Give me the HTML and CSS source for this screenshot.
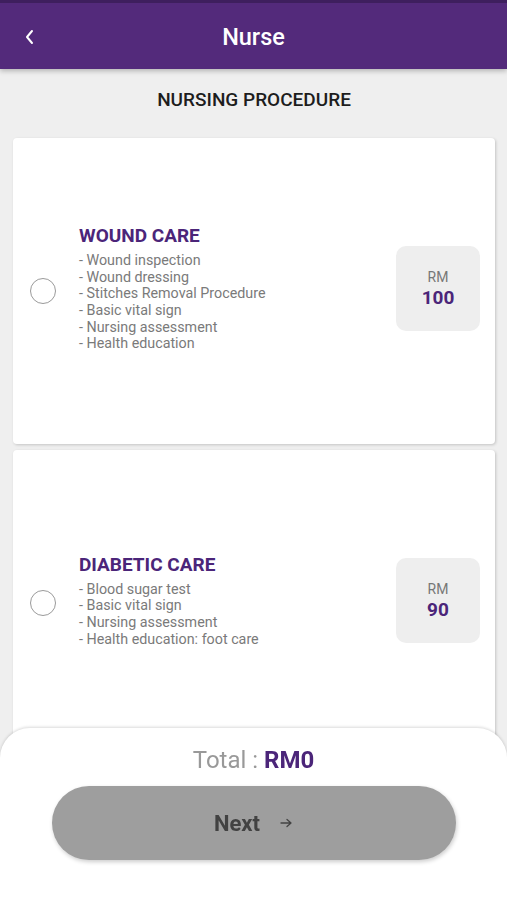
FILE: index.html
```html
<!DOCTYPE html>
<html lang="en">
  <head>
    <meta charset="UTF-8" />
    <meta name="viewport" content="width=device-width, initial-scale=1.0" />
    <title>Nurse</title>
    <link rel="stylesheet" href="styles.css">
  </head>

  <body>
    <!-- top bar -->
    <header class="topbar">
      <span class="topbar__back">
        <svg width="12" height="18" viewBox="0 0 12 18"><path d="M8 3 L3 9 L8 15" fill="none" stroke="#fff" stroke-width="2" stroke-linecap="round" stroke-linejoin="round"/></svg>
      </span>
      <h1 class="topbar__title">Nurse</h1>
    </header>

    <main class="content">
      <h2 class="section-title">NURSING PROCEDURE</h2>

      <div class="card">
        <span class="radio"></span>
        <div class="card__body">
          <div class="card__title">WOUND CARE</div>
          <ul class="card__list">
            <li>- Wound inspection</li>
            <li>- Wound dressing</li>
            <li>- Stitches Removal Procedure</li>
            <li>- Basic vital sign</li>
            <li>- Nursing assessment</li>
            <li>- Health education</li>
          </ul>
        </div>
        <div class="price">
          <span class="price__unit">RM</span>
          <span class="price__value">100</span>
        </div>
      </div>

      <div class="card">
        <span class="radio"></span>
        <div class="card__body">
          <div class="card__title">DIABETIC CARE</div>
          <ul class="card__list">
            <li>- Blood sugar test</li>
            <li>- Basic vital sign</li>
            <li>- Nursing assessment</li>
            <li>- Health education: foot care</li>
          </ul>
        </div>
        <div class="price">
          <span class="price__unit">RM</span>
          <span class="price__value">90</span>
        </div>
      </div>
    </main>

    <!-- bottom sheet -->
    <footer class="sheet">
      <div class="total">Total : <strong>RM0</strong></div>
      <button class="next-btn">Next
        <svg class="next-btn__arrow" width="13" height="10" viewBox="0 0 13 10"><path d="M1 5 H11 M7 1.5 L11 5 L7 8.5" fill="none" stroke="#444" stroke-width="1.3" stroke-linecap="round" stroke-linejoin="round"/></svg>
      </button>
    </footer>
  </body>
</html>
```

FILE: styles.css
```css
body {
  font-family: Roboto, "Liberation Sans", sans-serif;
  margin: 0;
  padding: 0;
  background: #efefef;
}

.topbar {
  height: 66px;
  border-top: 3px solid #3e1f5e;
  background: #532a7b;
  display: flex;
  align-items: center;
  justify-content: center;
  position: relative;
  box-shadow: 0 2px 5px rgba(0, 0, 0, 0.25);
}

.topbar__back {
  position: absolute;
  left: 24px;
  top: 25px;
  display: flex;
}

.topbar__title {
  margin: 0;
  color: #fff;
  font-size: 23.5px;
  font-weight: 500;
  padding-top: 2px;
}

.content {
  padding: 0 12px 180px 13px;
}

.section-title {
  text-align: center;
  margin: 0;
  padding: 20px 0 27px;
  font-size: 19px;
  font-weight: 500;
  color: #1d1d1d;
  line-height: 22px;
}

.card {
  background: #fff;
  border-radius: 4px;
  box-shadow: 1px 1px 3px rgba(0, 0, 0, 0.18);
  min-height: 306px;
  margin-bottom: 6px;
  display: flex;
  align-items: center;
  padding: 0 15px 0 17px;
  box-sizing: border-box;
}

.radio {
  width: 24px;
  height: 24px;
  border: 1.5px solid #9a9a9a;
  border-radius: 50%;
  flex-shrink: 0;
}

.card__body {
  flex: 1;
  padding-left: 23px;
  margin-bottom: 5px;
}

.card__title {
  color: #4b2579;
  font-size: 19px;
  font-weight: 700;
  line-height: 22px;
  margin-bottom: 5px;
}

.card__list {
  list-style: none;
  margin: 0;
  padding: 0;
  color: #7a7a7a;
  font-size: 14.3px;
  line-height: 16.6px;
}

.price {
  width: 84px;
  height: 85px;
  margin-bottom: 5px;
  background: #eeeeee;
  border-radius: 10px;
  display: flex;
  flex-direction: column;
  align-items: center;
  justify-content: center;
  flex-shrink: 0;
}

.price__unit {
  font-size: 14px;
  color: #777;
  line-height: 17px;
}

.price__value {
  font-size: 19px;
  font-weight: 700;
  color: #4b2579;
  line-height: 23px;
}

.sheet {
  position: fixed;
  left: 0;
  right: 0;
  bottom: 0;
  height: 172px;
  background: #fff;
  border-radius: 30px 30px 0 0;
  box-shadow: 0 -1px 3px rgba(0, 0, 0, 0.15);
  display: flex;
  flex-direction: column;
  align-items: center;
  padding-top: 18px;
  box-sizing: border-box;
}

.total {
  font-size: 24px;
  color: #999;
  line-height: 28px;
}

.total strong {
  color: #4b2579;
  font-weight: 700;
}

.next-btn {
  margin-top: 12px;
  width: 404px;
  height: 74px;
  border: none;
  border-radius: 37px;
  background: #9e9e9e;
  box-shadow: 1px 2px 4px rgba(0, 0, 0, 0.2);
  font-family: inherit;
  font-size: 22px;
  font-weight: 700;
  color: #424242;
  display: flex;
  align-items: center;
  justify-content: center;
  gap: 20px;
  padding-left: 6px;
}

.next-btn__arrow {
  flex-shrink: 0;
}
```
